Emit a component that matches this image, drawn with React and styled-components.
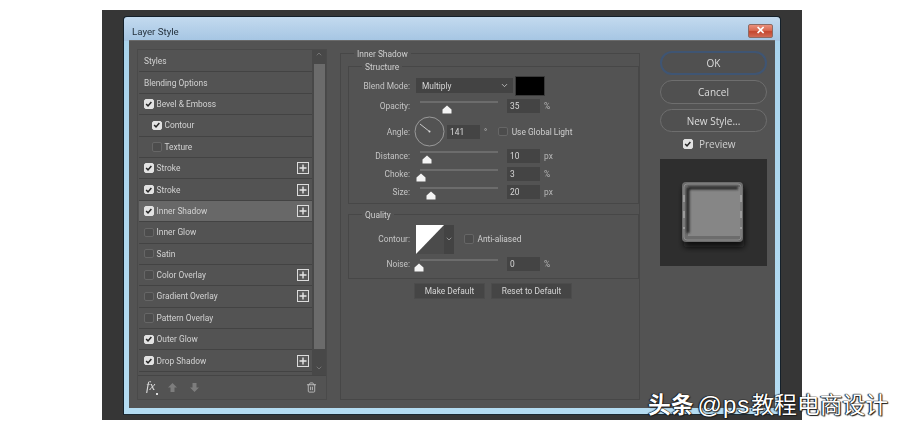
import React from "react";
import styled, { createGlobalStyle } from "styled-components";
import { Trash2, ChevronDown, ChevronUp } from "lucide-react";

const Global = createGlobalStyle`
  html, body { margin: 0; padding: 0; background: #fff; }
  body { width: 900px; height: 430px; overflow: hidden; font-family: Roboto, "Liberation Sans", sans-serif; }
`;
const Page = styled.div`position: relative; width: 900px; height: 430px; padding: 10px 0 0 102px; box-sizing: border-box;`;
const Backdrop = styled.div`width: 700px; height: 410px; background: #363636; padding: 6px 0 0 21px; box-sizing: border-box; filter: blur(0.3px);`;
const Dialog = styled.div`
  width: 658px; height: 399px; box-sizing: border-box; display: flex; flex-direction: column;
  padding: 0 5px 6px; border-radius: 4px 4px 0 0; border: 1px solid #14202a; border-bottom-color: #1c2a33;
  background: linear-gradient(180deg, #c3daef 0, #a5c5e3 24px, #a9d3ec 24px, #b4dcf2 100%);
`;
const TitleBar = styled.div`height: 23px; display: flex; align-items: center; justify-content: space-between; padding-left: 3px; flex: none;`;
const Title = styled.span`font-size: 9.7px; color: #25323e; padding-top: 5px;`;
const CloseBtn = styled.div`
  width: 25px; height: 14px; margin: 4px 2px 0 0; display: flex; align-items: center; justify-content: center; box-sizing: border-box;
  background: linear-gradient(180deg, #e9907c 0, #d96a52 45%, #c4472f 55%, #d06a55 100%); border: 1px solid #8c6a64; border-radius: 2px;
  color: #fff; font-size: 11px; font-weight: 700; line-height: 1;
`;
const Body = styled.div`
  flex: 1; background: #535353; border-top: 1px solid #6a6a6a; display: flex; padding: 8px 0 8px 8px; box-sizing: border-box; min-height: 0;
`;
const Left = styled.div`width: 190px; flex: none; border: 1px solid #4a4a4a; display: flex; flex-direction: column; box-sizing: border-box;`;
const ListArea = styled.div`display: flex; height: 325px; flex: none;`;
const List = styled.div`flex: 1; display: flex; flex-direction: column; padding: 1px 0 0 1px;`;
const Row = styled.div`
  height: 21.4px; box-sizing: border-box; display: flex; align-items: center; flex: none; position: relative;
  padding-left: ${p => (p.$level === 1 ? 13 : 5)}px; gap: 3px; padding-right: 3px;
  border-bottom: 1px solid #434343;
  background: ${p => (p.$active ? "#686868" : "#535353")};
  font-size: 8.4px; color: #d2d2d2;
`;
const RowLabel = styled.span`flex: 1;`;
const Check = styled.span`
  width: 9.5px; height: 9.5px; border-radius: 2px; box-sizing: border-box; flex: none; display: inline-flex; align-items: center; justify-content: center;
  background: ${p => (p.$on ? "#e2e2e2" : "#4c4c4c")}; border: 1px solid ${p => (p.$on ? "#e2e2e2" : "#666")};
`;
const Scroll = styled.div`width: 14px; flex: none; background: #484848; display: flex; flex-direction: column; align-items: center; color: #8a8a8a;`;
const Thumb = styled.div`width: 11px; height: 285px; background: #6b6b6b; margin: 6px 0 15px; flex: none;`;
const Foot = styled.div`flex: 1; display: flex; align-items: center; padding: 0 9px 0 8px; color: #8d8d8d; gap: 11px; border-top: 1px solid #454545;`;
const Fx = styled.span`font: italic 13px "Liberation Serif", serif; color: #ddd; position: relative; margin-right: 1px; padding-bottom: 3px;`;
const Dot = styled.i`position: absolute; right: -3px; bottom: 2px; width: 2px; height: 2px; background: #ddd;`;
const Spacer = styled.div`flex: 1;`;

const Middle = styled.div`width: 300px; flex: none; margin: 4px 0 0 13px; border: 1px solid #474747; box-sizing: border-box; position: relative; padding: 12px 0 0 7px;`;
const Legend = styled.span`position: absolute; top: -5px; left: ${p => p.$left}px; font-size: 8.4px; line-height: 11px; color: #cfcfcf; background: #535353; padding: 0 3px;`;
const Group = styled.div`width: 291px; box-sizing: border-box; border: 1px solid #474747; position: relative; height: ${p => p.$h}px; padding-top: ${p => p.$pt}px; margin-bottom: 10px;`;
const F = styled.div`height: ${p => p.$h}px; margin-top: ${p => p.$mt || 0}px; display: flex; align-items: center; font-size: 8.4px; color: #c4c4c4; position: relative;`;
const Lbl = styled.span`width: 61px; text-align: right; flex: none; margin-right: ${p => p.$mr ?? 6}px;`;
const Select = styled.div`width: 97px; height: 15px; background: #434343; color: #d6d6d6; display: flex; align-items: center; justify-content: space-between; padding: 0 4px 0 6px; box-sizing: border-box;`;
const Swatch = styled.div`width: 30px; height: 20px; background: #000; border: 1px solid #3a3a3a; box-sizing: border-box; margin-left: 2px;`;
const Track = styled.div`width: 78px; height: 2px; background: #6c6c6c; position: relative; margin: -8px 9px 0 4px; flex: none;`;
const SlideThumb = styled.svg`position: absolute; top: 4px; margin-left: -5px;`;
const Num = styled.div`width: 33px; height: 14px; margin-left: ${p => p.$ml || 0}px; background: #444; color: #d6d6d6; font-size: 8.4px; display: flex; align-items: center; padding-left: 3px; box-sizing: border-box; flex: none;`;
const Unit = styled.span`margin-left: 4px; color: #b8b8b8;`;
const Deg = styled.span`margin: 0 0 0 4px; color: #b8b8b8;`;
const InlineCheck = styled.label`display: flex; align-items: center; gap: 4px; margin-left: ${p => p.$ml}px; color: #cfcfcf;`;
const ContourBox = styled.div`width: 38px; height: 29px; display: flex; background: #4b4b4b; flex: none;`;
const ContourDrop = styled.div`width: 10px; display: flex; align-items: center; justify-content: center; background: #434343; color: #bbb;`;
const Buttons = styled.div`display: flex; gap: 6px; justify-content: flex-start; padding-left: 66px; margin-top: -6px;`;
const SmallBtn = styled.div`width: ${p => p.$w}px; height: 16px; box-sizing: border-box; background: #454545; border: 1px solid #4c4c4c; color: #d6d6d6; font-size: 8.4px; display: flex; align-items: center; justify-content: center;`;

const Right = styled.div`width: 107px; flex: none; margin: 2px 0 0 20px; display: flex; flex-direction: column; align-items: center; font-family: "Open Sans", sans-serif;`;
const Pill = styled.div`
  width: 107px; height: ${p => p.$h || 24}px; box-sizing: border-box; border-radius: 12px; display: flex; align-items: center; justify-content: center; margin-bottom: 5px;
  border: ${p => (p.$primary ? "2px solid #3f5573" : "1px solid #6e6e6e")}; color: #dcdcdc; font-size: 10px; background: #505050;
`;
const PreviewCheck = styled.label`display: flex; align-items: center; gap: 6px; font-size: 10px; color: #cfcfcf; margin: 0 8px 8px 0;`;
const PreviewBox = styled.svg`width: 107px; height: 107px; display: block; flex: none;`;

const Watermark = styled.div`
  position: absolute; left: 648px; top: 390px; white-space: nowrap; font-size: 22.8px; line-height: 28px; color: #fff;
  font-family: "Noto Sans CJK SC", "Liberation Sans", sans-serif;
  text-shadow: 0 0 1px #000, 0 0 1px #000, 1px 1px 1px #222, -1px 0 1px #222;
`;
const Bold = styled.b`font-weight: 700; margin-right: 4px;`;
const Handle = styled.span`font-family: "Liberation Sans", sans-serif; font-size: 24px; letter-spacing: 1px; margin-right: 1px;`;

const Tick = () => (
  <svg width="8" height="8" viewBox="0 0 8 8"><path d="M1.2 4 L3.2 6 L6.8 1.8" fill="none" stroke="#262626" strokeWidth="1.6" /></svg>
);
const PlusBox = () => (
  <svg width="12" height="12" viewBox="0 0 12 12"><rect x=".5" y=".5" width="11" height="11" fill="#5a5a5a" stroke="#dcdcdc" /><path d="M6 2.5v7M2.5 6h7" stroke="#e6e6e6" strokeWidth="1.4" /></svg>
);
const BlockArrow = ({ down }) => (
  <svg width="11" height="11" viewBox="0 0 11 11" style={down ? { transform: "scaleY(-1)" } : undefined}>
    <path d="M5.5 1 L10 5.5 H7.5 V10 H3.5 V5.5 H1 Z" fill="#7d7d7d" />
  </svg>
);
const Slider = ({ at }) => (
  <Track>
    <SlideThumb width="10" height="9" viewBox="0 0 10 9" style={{ left: at }}>
      <path d="M5 .5 L9.5 4.5 V8.5 H.5 V4.5 Z" fill="#f4f4f4" />
    </SlideThumb>
  </Track>
);
const rows = [
  ["Styles"], ["Blending Options"],
  ["Bevel & Emboss", 1], ["Contour", 1, 1], ["Texture", 0, 1],
  ["Stroke", 1, 0, 1], ["Stroke", 1, 0, 1], ["Inner Shadow", 1, 0, 1, 1],
  ["Inner Glow", 0], ["Satin", 0], ["Color Overlay", 0, 0, 1], ["Gradient Overlay", 0, 0, 1],
  ["Pattern Overlay", 0], ["Outer Glow", 1], ["Drop Shadow", 1, 0, 1],
];

const Preview = () => (
  <PreviewBox viewBox="0 0 107 107">
    <defs>
      <filter id="b"><feGaussianBlur stdDeviation="3" /></filter>
      <filter id="s"><feGaussianBlur stdDeviation="1" /></filter>
    </defs>
    <rect width="107" height="107" fill="#2e2e2e" />
    <rect x="24" y="28" width="60" height="60" rx="3" fill="#111" filter="url(#b)" />
    <rect x="22" y="23" width="61" height="60" rx="4" fill="#6c6c6c" />
    <rect x="24" y="25" width="57" height="56" rx="3" fill="none" stroke="#8c8c8c" strokeWidth="1" />
    <rect x="28" y="28" width="52" height="49" fill="#868686" />
    <path d="M28 29H78M28 29V74" stroke="#222" strokeWidth="3" filter="url(#s)" fill="none" />
    <path d="M24 36V70M81 36V70" stroke="#bdbdbd" strokeWidth="1" strokeDasharray="7 9" />
  </PreviewBox>
);

export default function App() {
  return (
    <Page>
      <Global />
      <Backdrop>
        <Dialog>
          <TitleBar>
            <Title>Layer Style</Title>
            <CloseBtn>✕</CloseBtn>
          </TitleBar>
          <Body>
            <Left>
              <ListArea>
                <List>
                  {rows.map(([t, on, lvl, plus, active], i) => (
                    <Row key={i} $level={lvl} $active={active}>
                      {on !== undefined && <Check $on={on}>{on ? <Tick /> : null}</Check>}
                      <RowLabel>{t}</RowLabel>
                      {plus ? <PlusBox /> : null}
                    </Row>
                  ))}
                </List>
                <Scroll>
                  <ChevronUp size={8} />
                  <Thumb />
                  <ChevronDown size={8} />
                </Scroll>
              </ListArea>
              <Foot>
                <Fx>fx<Dot /></Fx>
                <BlockArrow />
                <BlockArrow down />
                <Spacer />
                <Trash2 size={11} color="#bdbdbd" />
              </Foot>
            </Left>
            <Middle>
              <Legend $left={13}>Inner Shadow</Legend>
              <Group $h={138} $pt={9}>
                <Legend $left={13}>Structure</Legend>
                <F $h={19}><Lbl>Blend Mode:</Lbl><Select>Multiply<ChevronDown size={9} /></Select><Swatch /></F>
                <F $h={20} $mt={1}><Lbl>Opacity:</Lbl><Slider at={27} /><Num>35</Num><Unit>%</Unit></F>
                <F $h={31}>
                  <Lbl $mr={4}>Angle:</Lbl>
                  <svg width="31" height="31" viewBox="0 0 31 31" style={{ flex: "none" }}>
                    <circle cx="15.5" cy="15.5" r="14.5" fill="none" stroke="#9a9a9a" />
                    <path d="M15.5 15.5 L6 8" stroke="#c8c8c8" />
                    <circle cx="15.5" cy="15.5" r="1" fill="#ddd" />
                  </svg>
                  <Num $ml={2}>141</Num><Deg>°</Deg>
                  <InlineCheck $ml={11}><Check />Use Global Light</InlineCheck>
                </F>
                <F $h={18}><Lbl>Distance:</Lbl><Slider at={7} /><Num>10</Num><Unit>px</Unit></F>
                <F $h={17}><Lbl>Choke:</Lbl><Slider at={1} /><Num>3</Num><Unit>%</Unit></F>
                <F $h={20}><Lbl>Size:</Lbl><Slider at={11} /><Num>20</Num><Unit>px</Unit></F>
              </Group>
              <Group $h={65} $pt={9}>
                <Legend $left={13}>Quality</Legend>
                <F $h={30}>
                  <Lbl>Contour:</Lbl>
                  <ContourBox>
                    <svg width="28" height="29" viewBox="0 0 28 29"><path d="M0 0H28L0 29Z" fill="#fff" /></svg>
                    <ContourDrop><ChevronDown size={8} /></ContourDrop>
                  </ContourBox>
                  <InlineCheck $ml={10}><Check />Anti-aliased</InlineCheck>
                </F>
                <F $h={20}><Lbl>Noise:</Lbl><Slider at={-1} /><Num>0</Num><Unit>%</Unit></F>
              </Group>
              <Buttons>
                <SmallBtn $w={71}>Make Default</SmallBtn>
                <SmallBtn $w={81}>Reset to Default</SmallBtn>
              </Buttons>
            </Middle>
            <Right>
              <Pill $primary>OK</Pill>
              <Pill>Cancel</Pill>
              <Pill $h={23}>New Style...</Pill>
              <PreviewCheck><Check $on><Tick /></Check>Preview</PreviewCheck>
              <Preview />
            </Right>
          </Body>
        </Dialog>
      </Backdrop>
      <Watermark><Bold>头条</Bold><Handle>@ps</Handle>教程电商设计</Watermark>
    </Page>
  );
}
